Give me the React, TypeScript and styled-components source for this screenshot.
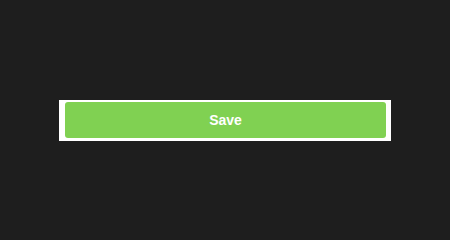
import React from "react";
import styled, { createGlobalStyle } from "styled-components";

const Global = createGlobalStyle`
  html, body { margin: 0; padding: 0; background: #1e1e1e; }
  #root { height: 240px; }
`;

const Page = styled.div`
  height: 240px;
  display: flex;
  align-items: center;
  justify-content: center;
  padding-top: 1px;
  box-sizing: border-box;
`;

const Panel = styled.div`
  width: 332px;
  height: 41px;
  box-sizing: border-box;
  background: #ffffff;
  padding: 2px 5px 3px 6px;
  display: flex;
`;

const Button = styled.button`
  flex: 1;
  border: none;
  border-radius: 3px;
  background: #80d152;
  color: #ffffff;
  font-family: "Liberation Sans", Arial, sans-serif;
  font-weight: 700;
  font-size: 14px;
  cursor: pointer;
  padding: 0;
`;

export default function App() {
  return (
    <>
      <Global />
      <Page>
        <Panel>
          <Button>Save</Button>
        </Panel>
      </Page>
    </>
  );
}
